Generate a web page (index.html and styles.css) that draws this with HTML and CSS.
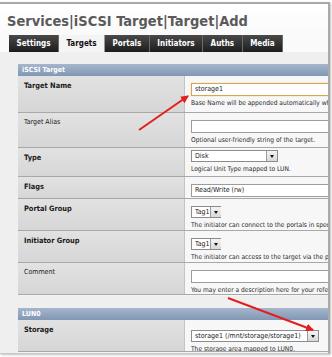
FILE: index.html
```html
<!DOCTYPE html>
<html>
<head>
<meta charset="utf-8">
<link rel="stylesheet" href="styles.css">
</head>
<body>
<div class="window">
  <h1 class="title">Services|iSCSI Target|Target|Add</h1>
  <ul class="tabs">
    <li class="tab">Settings</li>
    <li class="tab active">Targets</li>
    <li class="tab">Portals</li>
    <li class="tab">Initiators</li>
    <li class="tab">Auths</li>
    <li class="tab">Media</li>
  </ul>
  <div class="content">
    <div class="section">
      <div class="sechead">iSCSI Target</div>
      <div class="row r-name">
        <div class="label bold">Target Name</div>
        <div class="field">
          <div class="input focus">storage1</div>
          <div class="hint">Base Name will be appended automatically when starting without 'iqn.'.</div>
        </div>
      </div>
      <div class="row r-alias">
        <div class="label">Target Alias</div>
        <div class="field">
          <div class="input"></div>
          <div class="hint">Optional user-friendly string of the target.</div>
        </div>
      </div>
      <div class="row r-type">
        <div class="label bold">Type</div>
        <div class="field">
          <div class="select s-disk"><span class="val">Disk</span><span class="btn"></span></div>
          <div class="hint">Logical Unit Type mapped to LUN.</div>
        </div>
      </div>
      <div class="row r-flags">
        <div class="label bold">Flags</div>
        <div class="field">
          <div class="input">Read/Write (rw)</div>
        </div>
      </div>
      <div class="row r-group">
        <div class="label bold">Portal Group</div>
        <div class="field">
          <div class="select s-tag"><span class="val">Tag1</span><span class="btn"></span></div>
          <div class="hint">The initiator can connect to the portals in specific Portal Group.</div>
        </div>
      </div>
      <div class="row r-group">
        <div class="label bold">Initiator Group</div>
        <div class="field">
          <div class="select s-tag"><span class="val">Tag1</span><span class="btn"></span></div>
          <div class="hint">The initiator can access to the target via the portals by authorised initiator.</div>
        </div>
      </div>
      <div class="row r-comment">
        <div class="label">Comment</div>
        <div class="field">
          <div class="input"></div>
          <div class="hint">You may enter a description here for your reference.</div>
        </div>
      </div>
    </div>
    <div class="section lun">
      <div class="sechead">LUN0</div>
      <div class="row r-storage">
        <div class="label bold">Storage</div>
        <div class="field">
          <div class="select s-storage"><span class="val">storage1 (/mnt/storage/storage1)</span><span class="btn"></span></div>
          <div class="hint">The storage area mapped to LUN0.</div>
        </div>
      </div>
    </div>
  </div>
</div>
<svg class="arrows" width="332" height="357" viewBox="0 0 332 357">
  <defs>
    <marker id="ah" markerWidth="8" markerHeight="8" refX="7" refY="4" orient="auto" markerUnits="userSpaceOnUse">
      <path d="M0,0 L8,4 L0,8 Z" fill="#e21e1e"/>
    </marker>
  </defs>
  <line x1="139" y1="130" x2="188" y2="96" stroke="#e21e1e" stroke-width="2" marker-end="url(#ah)"/>
  <line x1="228" y1="298" x2="313" y2="330" stroke="#e21e1e" stroke-width="2" marker-end="url(#ah)"/>
</svg>
</body>
</html>
```
FILE: styles.css
```css
* { box-sizing: border-box; }
html, body { margin: 0; padding: 0; }
body {
  width: 332px;
  height: 357px;
  overflow: hidden;
  background: #ffffff;
  font-family: "DejaVu Sans Condensed", "DejaVu Sans", sans-serif;
  position: relative;
}
.window {
  margin-top: 2px;
  width: 330px;
  height: 352px;
  border-top: 2px solid #a9a9a9;
  border-right: 2px solid #a9a9a9;
  border-bottom: 1px solid #c8c8c8;
  background: #fff;
  overflow: hidden;
  box-shadow: 1px 1px 2px rgba(0,0,0,0.25);
}
.title {
  margin: 0;
  padding: 9px 0 0 7px;
  height: 31px;
  font-size: 14.5px;
  font-weight: bold;
  color: #5a5a5a;
  background: linear-gradient(#ffffff, #fafafa);
}
.tabs {
  list-style: none;
  margin: 0;
  padding: 0 0 0 9px;
  display: flex;
  height: 17px;
  background: #fafafa;
}
.tab {
  height: 17px;
  padding: 0 7.5px;
  display: flex;
  align-items: center;
  font-size: 8px;
  font-weight: bold;
  color: #ffffff;
  background: linear-gradient(#4a4a4a, #1c1c1c);
  border-right: 1px solid #6a6a6a;
}
.tab.active {
  background: #f4f4f4;
  color: #111;
  border-right: 1px solid #9a9a9a;
}
.content {
  background: #efefef;
  height: 310px;
  padding: 12px 0 0 18px;
}
.section { width: 320px; }
.lun { margin-top: 13px; }
.sechead {
  height: 12px;
  padding-left: 4px;
  font-size: 7px;
  font-weight: bold;
  color: #ffffff;
  line-height: 12px;
  background: linear-gradient(#a5b6cc, #8197b4);
}
.row {
  display: grid;
  grid-template-columns: 167px minmax(0, 1fr);
  border-bottom: 1px solid #a8a8a8;
  box-shadow: 0 1px 0 #f4f4f4;
}
.label {
  padding: 5px 0 0 6px;
  font-size: 7px;
  color: #1a1a1a;
  background: linear-gradient(#e2e2e2, #d6d6d6);
  border-right: 1px solid #c4c4c4;
}
.label.bold { font-weight: bold; font-size: 7.4px; }
.field {
  min-width: 0;
  overflow: hidden;
  padding: 7px 0 0 6px;
  background: #f7f7f7;
  white-space: nowrap;
}
.r-name { height: 37px; }
.r-alias { height: 35px; }
.r-type { height: 29px; }
.r-type .field { padding-top: 2px; }
.r-flags { height: 22px; }
.r-group { height: 32px; }
.r-comment { height: 32px; }
.r-storage { height: 32px; }
.r-storage .field { padding-top: 10px; }
.input {
  height: 13px;
  width: 200px;
  border: 1px solid #9c9c9c;
  background: #fff;
  font-size: 7px;
  line-height: 11px;
  padding-left: 3px;
  color: #222;
}
.input.focus {
  border-color: #d6a651;
  box-shadow: 0 0 1px #e8c27a;
}
.hint {
  margin-top: 3px;
  font-size: 6.6px;
  color: #2a2a2a;
}
.select {
  display: flex;
  height: 12px;
  border: 1px solid #8c8c8c;
  background: #fff;
  font-size: 7px;
  line-height: 10px;
  color: #222;
}
.select .val { flex: 1; padding-left: 3px; }
.select .btn {
  flex: none;
  width: 11px;
  border-left: 1px solid #9a9a9a;
  background: linear-gradient(#f4f4f4, #d8d8d8);
  position: relative;
}
.select .btn::after {
  content: "";
  position: absolute;
  left: 3px;
  top: 4px;
  border-left: 2.5px solid transparent;
  border-right: 2.5px solid transparent;
  border-top: 3px solid #111;
}
.s-disk { width: 87px; }
.s-tag { width: 30px; }
.s-storage { width: 128px; }
.arrows {
  position: absolute;
  left: 0;
  top: 0;
  pointer-events: none;
}
```
